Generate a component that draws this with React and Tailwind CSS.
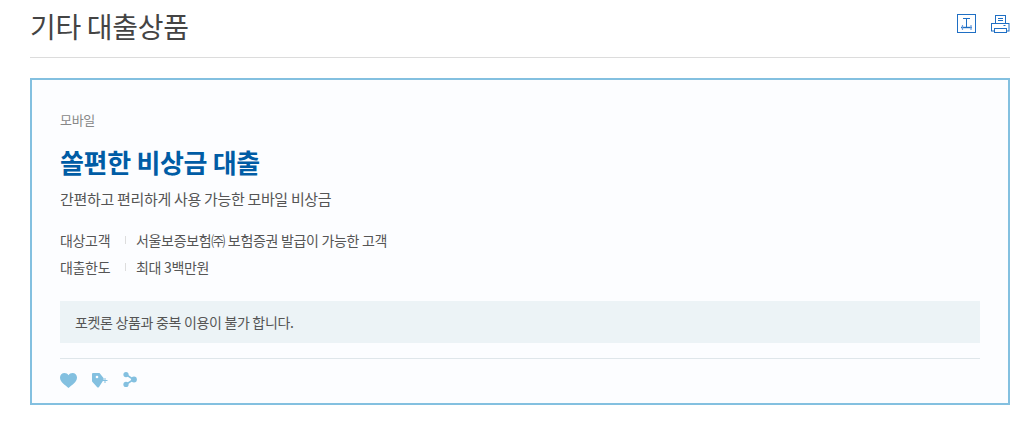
import React from 'react';

const details = [
  { label: '대상고객', value: '서울보증보험㈜ 보험증권 발급이 가능한 고객' },
  { label: '대출한도', value: '최대 3백만원' },
];

function TextSizeIcon() {
  return (
    <svg width="19" height="19" viewBox="0 0 19 19" fill="none" stroke="#1f6fc4" strokeWidth="1">
      <rect x="0.5" y="0.5" width="18" height="18" />
      <path d="M6 4.5h7M9.5 4.5v8.5" />
      <path d="M4 13.5h11" strokeWidth="1.4" />
      <path d="M5.5 11v5M14 11v5" stroke="#6d9fe0" strokeWidth="1.2" />
    </svg>
  );
}

function PrintIcon() {
  return (
    <svg width="19" height="19" viewBox="0 0 19 19" fill="#fff" stroke="#1f6fc4" strokeWidth="1">
      <rect x="4.5" y="1.5" width="10" height="8" />
      <path d="M7 4.5h5M7 6.5h5" />
      <rect x="0.5" y="9.5" width="17.5" height="7.5" />
      <rect x="3.5" y="14.5" width="12" height="4" />
      <path d="M12.5 11.5h2" />
    </svg>
  );
}

function HeartIcon() {
  return (
    <svg width="17" height="15" viewBox="0 0 17 15" fill="#83c0e0">
      <path d="M8.5 15C5.5 12.4 0 9.4 0 4.6 0 1.9 2 0 4.5 0 6.2 0 7.7.9 8.5 2.3 9.3.9 10.8 0 12.5 0 15 0 17 1.9 17 4.6 17 9.4 11.5 12.4 8.5 15z" />
    </svg>
  );
}

function TagPlusIcon() {
  return (
    <svg width="16" height="15" viewBox="0 0 16 15" fill="none">
      <path d="M0 1a1 1 0 0 1 1-1H7.5L11.5 5Q12 6 11.5 7L7 14Q6 15 5 14L.5 9Q0 8.5 0 8Z" fill="#83c0e0" />
      <circle cx="5" cy="4" r="1.3" fill="#fcfdff" />
      <path d="M10.5 7.5h5M13 5v5" stroke="#83c0e0" strokeWidth="1" />
    </svg>
  );
}

function ShareIcon() {
  return (
    <svg className="-mt-px" width="14" height="15" viewBox="0 0 14 15" fill="#83c0e0" stroke="#83c0e0">
      <path d="M3 2.5l7.5 5L3 12.5" fill="none" strokeWidth="1.6" />
      <circle cx="3" cy="2.6" r="2.6" stroke="none" />
      <circle cx="3" cy="12.4" r="2.6" stroke="none" />
      <circle cx="11" cy="7.5" r="2.9" stroke="none" />
    </svg>
  );
}

export default function App() {
  return (
    <div className="w-[1031px] h-[421px] overflow-hidden bg-white px-[30px] font-['Noto_Sans_CJK_KR','Noto_Sans',sans-serif] tracking-[-0.02em]">
      <div className="w-[980px]">
        <div className="flex h-[58px] items-start justify-between border-b border-[#dcdcdc]">
          <h1 className="mt-[6px] text-[28px] leading-10 font-normal text-[#444]">기타 대출상품</h1>
          <div className="flex gap-[15px] mt-[14px]">
            <TextSizeIcon />
            <PrintIcon />
          </div>
        </div>

        <div className="mt-5 h-[327px] border-2 border-[#83c0e0] bg-[#fcfdff] px-7 pt-[30px]">
          <p className="text-[13px] leading-5 text-[#888]">모바일</p>
          <h2 className="mt-[14px] text-[26px] leading-9 font-bold text-[#005ca5]">쏠편한 비상금 대출</h2>
          <p className="mt-[7px] text-[15px] leading-6 text-[#555]">간편하고 편리하게 사용 가능한 모바일 비상금</p>

          <div className="mt-[17px] flex flex-col gap-[3px] text-sm text-[#555]">
            {details.map((d) => (
              <div key={d.label} className="flex items-center h-6">
                <span className="w-[65px]">{d.label}</span>
                <span className="h-2 w-px bg-[#ddd]" />
                <span className="ml-[10px]">{d.value}</span>
              </div>
            ))}
          </div>

          <div className="mt-[22px] flex h-[42px] items-center bg-[#ecf3f6] px-[15px] text-sm text-[#555]">
            포켓론 상품과 중복 이용이 불가 합니다.
          </div>

          <div className="mt-[15px] flex items-start gap-[15px] border-t border-[#dfe6ea] pt-[14px]">
            <HeartIcon />
            <TagPlusIcon />
            <ShareIcon />
          </div>
        </div>
      </div>
    </div>
  );
}
